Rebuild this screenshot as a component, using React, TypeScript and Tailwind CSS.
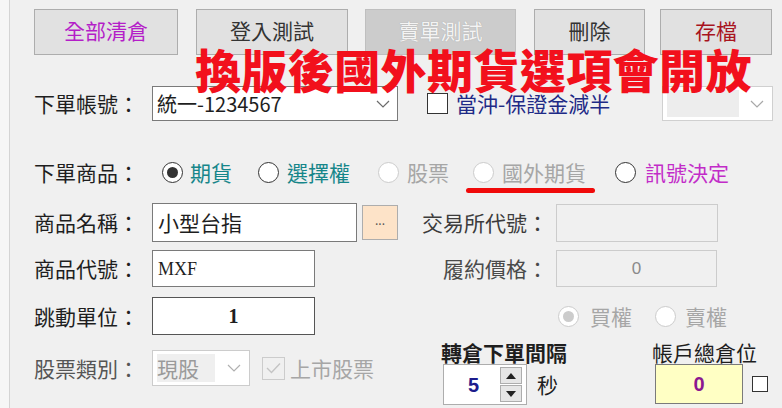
import React from 'react';

const Chevron = ({ color = '#6b6b6b' }: { color?: string }) => (
  <svg width="14" height="8" viewBox="0 0 14 8">
    <polyline points="1,1 7,7 13,1" fill="none" stroke={color} strokeWidth="1.2" />
  </svg>
);

function Radio({ checked, disabled }: { checked?: boolean; disabled?: boolean }) {
  const ring = disabled ? 'border-[#cccccc]' : 'border-[#333333]';
  const dot = disabled ? 'bg-[#cccccc]' : 'bg-[#333333]';
  return (
    <span className={`flex h-[21px] w-[21px] shrink-0 items-center justify-center rounded-full border-[1.5px] bg-white ${ring}`}>
      {checked && <span className={`h-[11px] w-[11px] rounded-full ${dot}`} />}
    </span>
  );
}

function Checkbox({ checked, disabled, size = 21 }: { checked?: boolean; disabled?: boolean; size?: number }) {
  return (
    <span
      className={`flex shrink-0 items-center justify-center border-[1.5px] ${disabled ? 'border-[#cccccc] bg-[#f0f0f0]' : 'border-[#333333] bg-white'}`}
      style={{ width: size, height: size }}
    >
      {checked && (
        <svg width="15" height="12" viewBox="0 0 15 12">
          <polyline points="1,6 5.5,10.5 14,1.5" fill="none" stroke={disabled ? '#c4c4c4' : '#333'} strokeWidth="1.4" />
        </svg>
      )}
    </span>
  );
}

function Button({ label, className = '', disabled }: { label: string; className?: string; disabled?: boolean }) {
  return (
    <div
      className={`flex h-[46px] items-start justify-center border pt-[7px] text-[21px] leading-[26px] ${
        disabled ? 'border-[#bfbfbf] bg-[#cccccc] text-[#f4f4f4] [text-shadow:0_0_1px_#9a9a9a]' : 'border-[#adadad] bg-[#e1e1e1]'
      } ${className}`}
    >
      {label}
    </div>
  );
}

export default function App() {
  return (
    <div className="relative flex h-[408px] w-[782px] overflow-hidden bg-[#f0f0f0] font-['Noto_Sans_CJK_TC','Noto_Sans_CJK_SC',sans-serif] text-[21px] leading-none text-[#1e1e1e]">
      {/* left edge */}
      <div className="h-full w-[10px] shrink-0 border-r border-[#d4d4d4] bg-[#f6f6f6]" />

      <div className="flex flex-1 flex-col pl-[24px]">
        {/* top buttons */}
        <div className="mt-[9px] flex">
          <Button label="全部清倉" className="w-[144px] text-[#b41ec8]" />
          <Button label="登入測試" className="ml-[18px] w-[152px] text-[#333333]" />
          <Button label="賣單測試" className="ml-[17px] w-[151px]" disabled />
          <Button label="刪除" className="ml-[18px] w-[111px] text-[#333333]" />
          <Button label="存檔" className="ml-[15px] w-[112px] text-[#a8141e]" />
        </div>

        {/* 下單帳號 */}
        <div className="mt-[31px] flex h-[35px] items-center">
          <span className="w-[118px]">下單帳號：</span>
          <div className="flex h-[35px] w-[246px] items-center justify-between border border-[#7a7a7a] bg-white pl-[4px] pr-[7px] text-[20px]">
            <span className="pt-[1px]">統一-1234567</span>
            <Chevron />
          </div>
          <span className="ml-[29px]">
            <Checkbox />
          </span>
          <span className="ml-[8px] w-[206px] text-[#1e2a86]">當沖-保證金減半</span>
          <div className="flex h-[35px] w-[111px] items-center justify-between border border-[#d0d0d0] bg-white pl-[4px] pr-[8px]">
            <span className="h-[27px] w-[72px] bg-[#ededed]" />
            <Chevron color="#a8a8a8" />
          </div>
        </div>

        {/* 下單商品 */}
        <div className="relative mt-[39px] flex h-[24px] items-center">
          <span className="w-[128px]">下單商品：</span>
          <Radio checked />
          <span className="ml-[7px] text-[#16868a]">期貨</span>
          <span className="ml-[26px]"><Radio /></span>
          <span className="ml-[8px] text-[#16868a]">選擇權</span>
          <span className="ml-[28px]"><Radio disabled /></span>
          <span className="ml-[8px] text-[#a6a6a6]">股票</span>
          <span className="ml-[24px]"><Radio disabled /></span>
          <span className="ml-[8px] text-[#a6a6a6]">國外期貨</span>
          <span className="ml-[29px]"><Radio /></span>
          <span className="ml-[9px] text-[#c22cc8]">訊號決定</span>
          {/* red annotation underline */}
          <span className="absolute left-[432px] top-[28px] h-[5px] w-[129px] rounded-full bg-[#f00a0a]" />
        </div>

        {/* 商品名稱 */}
        <div className="mt-[19px] flex h-[39px] items-center">
          <span className="w-[118px]">商品名稱：</span>
          <div className="flex h-[39px] w-[205px] items-center border border-[#7a7a7a] bg-white pl-[5px]">小型台指</div>
          <div className="ml-[5px] flex h-[35px] w-[36px] items-center justify-center border border-[#adadad] bg-[#fde3c8] pb-[6px] text-[12px] text-[#555]">...</div>
          <span className="w-[158px] pr-[8px] text-right text-[#3c3c3c]">交易所代號：</span>
          <div className="h-[38px] w-[162px] border border-[#cccccc] bg-[#f0f0f0]" />
        </div>

        {/* 商品代號 */}
        <div className="mt-[8px] flex h-[37px] items-center">
          <span className="w-[118px]">商品代號：</span>
          <div className="flex h-[37px] w-[163px] items-center border border-[#7a7a7a] bg-white pl-[5px] font-['Liberation_Serif',serif] text-[18px]">MXF</div>
          <span className="w-[241px] pr-[8px] text-right text-[#4a4a4a]">履約價格：</span>
          <div className="flex h-[37px] w-[161px] items-center justify-center border border-[#cccccc] bg-[#f0f0f0] font-['Liberation_Sans',sans-serif] text-[17px] text-[#8a8a8a]">0</div>
        </div>

        {/* 跳動單位 */}
        <div className="mt-[10px] flex h-[38px] items-center">
          <span className="w-[118px]">跳動單位：</span>
          <div className="flex h-[38px] w-[163px] items-center justify-center border-[1.5px] border-[#555555] bg-white font-['Liberation_Serif',serif] text-[20px] font-bold">1</div>
          <span className="ml-[243px]"><Radio checked disabled /></span>
          <span className="ml-[11px] text-[#a6a6a6]">買權</span>
          <span className="ml-[23px]"><Radio disabled /></span>
          <span className="ml-[9px] text-[#a6a6a6]">賣權</span>
        </div>

        {/* 股票類別 / 轉倉 / 帳戶 */}
        <div className="mt-[7px] flex items-start">
          <div className="mt-[8px] flex h-[36px] w-[407px] items-center">
            <span className="w-[118px] text-[#555555]">股票類別：</span>
            <div className="flex h-[36px] w-[98px] items-center justify-between border border-[#cccccc] bg-white pl-[4px] pr-[8px]">
              <span className="flex h-[28px] w-[58px] items-center bg-[#efefef] text-[#9a9a9a]">現股</span>
              <Chevron color="#b0b0b0" />
            </div>
            <span className="ml-[12px]"><Checkbox checked disabled size={23} /></span>
            <span className="ml-[5px] text-[#a6a6a6]">上市股票</span>
          </div>

          <div className="flex w-[211px] flex-col">
            <span className="h-[22px] font-bold text-[#1e1e1e]">轉倉下單間隔</span>
            <div className="ml-[2px] flex items-center">
              <div className="flex h-[41px] w-[84px] items-center border border-[#adadad] bg-white">
                <span className="ml-[24px] w-[32px] font-['Liberation_Sans',sans-serif] text-[20px] font-bold text-[#1c1c8c]">5</span>
                <div className="flex flex-col gap-[1px]">
                  <span className="flex h-[17px] w-[22px] items-center justify-center border border-[#adadad] bg-[#e6e6e6]">
                    <svg width="10" height="6" viewBox="0 0 10 6"><polygon points="0,6 5,0 10,6" fill="#222" /></svg>
                  </span>
                  <span className="flex h-[17px] w-[22px] items-center justify-center border border-[#adadad] bg-[#e6e6e6]">
                    <svg width="10" height="6" viewBox="0 0 10 6"><polygon points="0,0 10,0 5,6" fill="#222" /></svg>
                  </span>
                </div>
              </div>
              <span className="ml-[10px]">秒</span>
            </div>
          </div>

          <div className="flex flex-col">
            <span className="h-[22px] text-[#1e1e1e]">帳戶總倉位</span>
            <div className="ml-[3px] flex items-center">
              <div className="flex h-[40px] w-[88px] items-center justify-center border-[1.5px] border-[#7a7a7a] bg-[#ffffc4] font-['Liberation_Sans',sans-serif] text-[20px] font-bold text-[#8c1890]">0</div>
              <span className="ml-[9px]"><Checkbox size={16} /></span>
            </div>
          </div>
        </div>
      </div>

      {/* red annotation text */}
      <div className="absolute left-[195px] top-[45px] whitespace-nowrap text-[46px] font-black leading-none tracking-[0.4px] text-[#f2101c]">
        換版後國外期貨選項會開放
      </div>
    </div>
  );
}
